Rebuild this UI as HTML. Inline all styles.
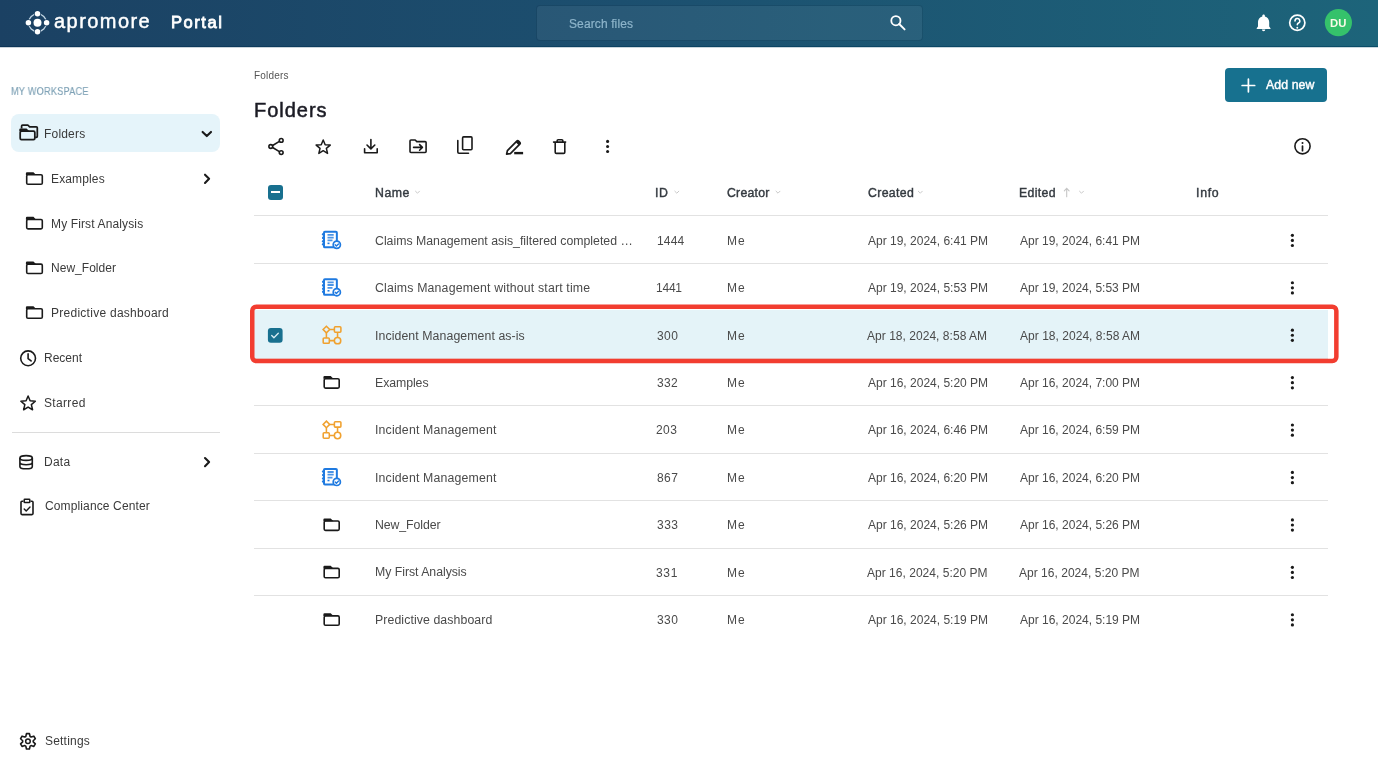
<!DOCTYPE html>
<html><head><meta charset="utf-8">
<style>
*{box-sizing:border-box;margin:0;padding:0}
html,body{width:1378px;height:783px;overflow:hidden;background:#fff;font-family:"Liberation Sans",sans-serif;color:#333}
#hdr{position:absolute;left:0;top:0;width:1378px;height:46px;background:linear-gradient(90deg,#1b4163 0%,#1c4f6f 45%,#1d647a 100%)}
#hdrl{position:absolute;left:0;top:46px;width:1378px;height:1px;background:linear-gradient(90deg,#0e3557 0%,#0c4262 45%,#0a4d68 100%)}
#hdrs{position:absolute;left:0;top:47px;width:1378px;height:1px;background:linear-gradient(90deg,#0e3557 0%,#0c4262 45%,#0a4d68 100%);opacity:0.22}
.t{position:absolute;white-space:nowrap;line-height:1;-webkit-font-smoothing:antialiased;will-change:transform}
svg{position:absolute;overflow:visible}
.box{position:absolute}
</style></head><body>
<div id="hdr"></div><div id="hdrl"></div><div id="hdrs"></div>
<svg style="left:0;top:0" width="240" height="47">
  <circle cx="37.5" cy="22.75" r="8.9" fill="none" stroke="#c4d7e5" stroke-width="1.3"/>
  <g fill="#1b4163"><circle cx="37.5" cy="13.75" r="3.4"/><circle cx="37.5" cy="31.75" r="3.4"/><circle cx="28.4" cy="22.75" r="3.4"/><circle cx="46.6" cy="22.75" r="3.4"/></g>
  <g fill="#fff"><circle cx="37.5" cy="22.75" r="4.0"/><circle cx="37.5" cy="13.75" r="2.75"/><circle cx="37.5" cy="31.75" r="2.75"/><circle cx="28.4" cy="22.75" r="2.75"/><circle cx="46.6" cy="22.75" r="2.75"/></g>
</svg>
<div class="t" style="left:54.22px;top:10.65px;font-size:20px;color:#fff;letter-spacing:1.446px;-webkit-text-stroke:0.45px #fff;">apromore</div>
<div class="t" style="left:170.76px;top:14.95px;font-size:16.6px;color:#fff;letter-spacing:1.509px;-webkit-text-stroke:0.8px #fff;">Portal</div>
<div class="box" style="left:537px;top:6px;width:385px;height:34px;border-radius:3px;background:rgba(255,255,255,0.058);box-shadow:0 0 0 1px rgba(0,20,40,0.10)"></div>
<div class="t" style="left:569.16px;top:17.69px;font-size:12px;color:#8db4ca;letter-spacing:0.115px;-webkit-text-stroke:0.2px #8db4ca;">Search files</div>
<svg style="left:0;top:0" width="1378" height="47">
  <circle cx="895.9" cy="20.7" r="4.6" fill="none" stroke="#fff" stroke-width="1.8"/>
  <line x1="899.2" y1="24" x2="904.6" y2="29.4" stroke="#fff" stroke-width="1.9" stroke-linecap="round"/>
  <path d="M1263.6 14.6c-0.8 0 -1.3 0.6 -1.3 1.3v0.5c-2.6 0.6 -4.3 2.9 -4.3 5.6v4.6l-1.3 1.6v0.9h13.8v-0.9l-1.3 -1.6v-4.6c0 -2.7 -1.7 -5 -4.3 -5.6v-0.5c0 -0.7 -0.5 -1.3 -1.3 -1.3z M1261.9 29.6a1.7 1.7 0 0 0 3.4 0z" fill="#fff"/>
  <circle cx="1297.3" cy="22.8" r="7.6" fill="none" stroke="#fff" stroke-width="1.7"/>
  <path d="M1295.0 20.9a2.4 2.4 0 1 1 3.5 2.15c-0.75 0.38 -1.2 0.9 -1.2 1.65v0.1" fill="none" stroke="#fff" stroke-width="1.55" stroke-linecap="round"/>
  <circle cx="1297.3" cy="27.7" r="0.95" fill="#fff"/>
  <circle cx="1338.4" cy="22.6" r="13.6" fill="#35c26b"/>
</svg>
<div class="t" style="left:1330.10px;top:17.87px;font-size:11.3px;color:#fbfbe8;font-weight:bold;">DU</div>
<div class="t" style="left:11.04px;top:86.02px;font-size:10.9px;color:#7fa2b6;letter-spacing:0.275px;-webkit-text-stroke:0.15px #7fa2b6;transform:scaleX(0.84);transform-origin:0 0;">MY WORKSPACE</div>
<div class="box" style="left:11.3px;top:114.2px;width:208.4px;height:37.6px;border-radius:8px;background:#e5f4fa"></div>
<div class="t" style="left:44.18px;top:127.79px;font-size:12px;color:#3a3a3a;letter-spacing:0.192px;">Folders</div>
<div class="t" style="left:51.26px;top:172.99px;font-size:12px;color:#3a3a3a;letter-spacing:0.138px;">Examples</div>
<div class="t" style="left:51.26px;top:217.66px;font-size:12px;color:#3a3a3a;letter-spacing:0.133px;">My First Analysis</div>
<div class="t" style="left:51.26px;top:262.33px;font-size:12px;color:#3a3a3a;letter-spacing:0.030px;">New_Folder</div>
<div class="t" style="left:51.26px;top:307.00px;font-size:12px;color:#3a3a3a;letter-spacing:0.265px;">Predictive dashboard</div>
<div class="t" style="left:44.18px;top:352.09px;font-size:12px;color:#3a3a3a;letter-spacing:0.002px;">Recent</div>
<div class="t" style="left:44.46px;top:396.79px;font-size:12px;color:#3a3a3a;letter-spacing:0.327px;">Starred</div>
<div class="box" style="left:11.5px;top:431.6px;width:208px;height:1px;background:#dcdcdc"></div>
<div class="t" style="left:44.18px;top:456.19px;font-size:12px;color:#3a3a3a;letter-spacing:0.250px;">Data</div>
<div class="t" style="left:44.82px;top:500.39px;font-size:12px;color:#3a3a3a;letter-spacing:0.129px;">Compliance Center</div>
<div class="t" style="left:44.50px;top:735.49px;font-size:12px;color:#3a3a3a;letter-spacing:0.201px;">Settings</div>
<svg style="left:0;top:0" width="240" height="783"><path d="M21.6 128.6V126q0 -1 1 -1H27.8l1.8 1.8H36.3q1 0 1 1V136.3q0 1 -1 1H35.2" fill="none" stroke="#1a1a1a" stroke-width="1.75" stroke-linejoin="round"/><rect x="20.18" y="131.18" width="14.65" height="8.45" rx="1.3" fill="none" stroke="#1a1a1a" stroke-width="1.75"/><path d="M19.30 132.05V129.60q0 -1.1 1.1 -1.1H26.52l2.85 2.85H19.30z" fill="#1a1a1a"/><path d="M202.6 131.9l4.2 4.2l4.2 -4.2" fill="none" stroke="#1a1a1a" stroke-width="2.1" stroke-linecap="round" stroke-linejoin="round"/><rect x="26.70" y="174.80" width="15.60" height="9.40" rx="1.3" fill="none" stroke="#1a1a1a" stroke-width="1.6"/><path d="M25.90 175.60V173.30q0 -1.1 1.1 -1.1H33.47l2.76 2.76H25.90z" fill="#1a1a1a"/><rect x="26.70" y="219.47" width="15.60" height="9.40" rx="1.3" fill="none" stroke="#1a1a1a" stroke-width="1.6"/><path d="M25.90 220.27V217.97q0 -1.1 1.1 -1.1H33.47l2.76 2.76H25.90z" fill="#1a1a1a"/><rect x="26.70" y="264.14" width="15.60" height="9.40" rx="1.3" fill="none" stroke="#1a1a1a" stroke-width="1.6"/><path d="M25.90 264.94V262.64q0 -1.1 1.1 -1.1H33.47l2.76 2.76H25.90z" fill="#1a1a1a"/><rect x="26.70" y="308.81" width="15.60" height="9.40" rx="1.3" fill="none" stroke="#1a1a1a" stroke-width="1.6"/><path d="M25.90 309.61V307.31q0 -1.1 1.1 -1.1H33.47l2.76 2.76H25.90z" fill="#1a1a1a"/><path d="M205.0 174.7l4.1 4.1l-4.1 4.1" fill="none" stroke="#1a1a1a" stroke-width="2.1" stroke-linecap="round" stroke-linejoin="round"/><circle cx="28.1" cy="358.3" r="7.4" fill="none" stroke="#1a1a1a" stroke-width="1.6"/><path d="M28.1 353.9v4.6l3 2.4" fill="none" stroke="#1a1a1a" stroke-width="1.6" stroke-linecap="round"/><polygon points="28.10,396.00 30.11,400.83 35.33,401.25 31.35,404.66 32.57,409.75 28.10,407.02 23.63,409.75 24.85,404.66 20.87,401.25 26.09,400.83" fill="none" stroke="#1a1a1a" stroke-width="1.5" stroke-linejoin="round"/><ellipse cx="26.1" cy="458" rx="6.2" ry="2.4" fill="none" stroke="#1a1a1a" stroke-width="1.6"/><path d="M19.9 458v8.4c0 1.4 2.8 2.4 6.2 2.4s6.2 -1 6.2 -2.4v-8.4 M19.9 462.3c0 1.4 2.8 2.4 6.2 2.4s6.2 -1 6.2 -2.4" fill="none" stroke="#1a1a1a" stroke-width="1.6"/><path d="M205.0 458.0l4.1 4.1l-4.1 4.1" fill="none" stroke="#1a1a1a" stroke-width="2.1" stroke-linecap="round" stroke-linejoin="round"/><path d="M23.4 501.2h-1.4q-1 0 -1 1v11.4q0 1 1 1h10q1 0 1 -1v-11.4q0 -1 -1 -1h-1.4" fill="none" stroke="#1a1a1a" stroke-width="1.6"/><rect x="24.2" y="499.3" width="5.6" height="3.2" rx="0.6" fill="none" stroke="#1a1a1a" stroke-width="1.5"/><path d="M24.2 509l2 2l3.8 -4" fill="none" stroke="#1a1a1a" stroke-width="1.4" stroke-linecap="round" stroke-linejoin="round"/><polygon points="25.79,736.46 26.46,733.64 29.44,733.64 30.11,736.46 31.07,737.01 33.84,736.18 35.33,738.76 33.22,740.75 33.22,741.85 35.33,743.84 33.84,746.42 31.07,745.59 30.11,746.14 29.44,748.96 26.46,748.96 25.79,746.14 24.83,745.59 22.06,746.42 20.57,743.84 22.68,741.85 22.68,740.75 20.57,738.76 22.06,736.18 24.83,737.01" fill="none" stroke="#1a1a1a" stroke-width="1.6" stroke-linejoin="round"/><circle cx="27.95" cy="741.3" r="2.3" fill="none" stroke="#1a1a1a" stroke-width="1.5"/></svg>
<div class="t" style="left:254.02px;top:71.42px;font-size:10px;color:#555;letter-spacing:0.180px;">Folders</div>
<div class="t" style="left:253.86px;top:99.65px;font-size:20px;color:#1b1b24;letter-spacing:0.972px;-webkit-text-stroke:0.5px #1b1b24;">Folders</div>
<div class="box" style="left:1224.9px;top:67.7px;width:102.6px;height:33.9px;border-radius:4px;background:#17718f"></div>
<div class="t" style="left:1265.84px;top:78.55px;font-size:12.3px;color:#fff;letter-spacing:0.085px;-webkit-text-stroke:0.4px #fff;">Add new</div>
<svg style="left:0;top:0" width="1378" height="783"><path d="M272.6 145.5L279.4 141.4 M272.6 147.5L279.4 151.6" fill="none" stroke="#1a1a1a" stroke-width="1.6" stroke-linecap="round" stroke-linejoin="round"/><circle cx="270.8" cy="146.5" r="1.9" fill="none" stroke="#1a1a1a" stroke-width="1.6" stroke-linecap="round" stroke-linejoin="round"/><circle cx="281.2" cy="140.4" r="1.9" fill="none" stroke="#1a1a1a" stroke-width="1.6" stroke-linecap="round" stroke-linejoin="round"/><circle cx="281.2" cy="152.6" r="1.9" fill="none" stroke="#1a1a1a" stroke-width="1.6" stroke-linecap="round" stroke-linejoin="round"/><polygon points="323.20,140.00 325.16,144.71 330.24,145.11 326.37,148.43 327.55,153.39 323.20,150.73 318.85,153.39 320.03,148.43 316.16,145.11 321.24,144.71" fill="none" stroke="#1a1a1a" stroke-width="1.5" stroke-linejoin="round"/><path d="M370.9 139.5v9.2 M367 145l3.9 3.9l3.9 -3.9 M364.6 148.8v3.9h12.6v-3.9" fill="none" stroke="#1a1a1a" stroke-width="1.6" stroke-linecap="round" stroke-linejoin="round"/><path d="M410 151.6v-10.6q0 -1 1 -1h4.2l1.6 1.6h8.3q1 0 1 1v8.9q0 1 -1 1h-14.1q-1 0 -1 -1z M413.6 147.4h8.6 M419.6 144.6l2.8 2.8l-2.8 2.8" fill="none" stroke="#1a1a1a" stroke-width="1.6" stroke-linecap="round" stroke-linejoin="round"/><rect x="462.6" y="136.9" width="9.4" height="12.9" rx="1" fill="none" stroke="#1a1a1a" stroke-width="1.6" stroke-linecap="round" stroke-linejoin="round"/><path d="M457.8 140.6v11.4q0 1.2 1.2 1.2h9.5" fill="none" stroke="#1a1a1a" stroke-width="1.6" stroke-linecap="round" stroke-linejoin="round"/><path d="M506.6 154.2l0.8 -3.6l9.4 -9.4q0.9 -0.9 1.8 0l1.2 1.2q0.9 0.9 0 1.8l-9.4 9.4z" fill="none" stroke="#1a1a1a" stroke-width="1.7" stroke-linejoin="round"/><path d="M516.6 141.4l3 3" stroke="#1a1a1a" stroke-width="2.4"/><rect x="514.2" y="151.9" width="8.9" height="2.4" fill="#1a1a1a"/><path d="M553.6 142.1h12 M555.2 142.6v9.6q0 1.2 1.2 1.2h7.2q1.2 0 1.2 -1.2v-9.6 M557.2 142v-1.4q0 -0.9 0.9 -0.9h3.8q0.9 0 0.9 0.9v1.4" fill="none" stroke="#1a1a1a" stroke-width="1.6" stroke-linecap="round" stroke-linejoin="round"/><circle cx="607.6" cy="141.4" r="1.55" fill="#1a1a1a"/><circle cx="607.6" cy="146.5" r="1.55" fill="#1a1a1a"/><circle cx="607.6" cy="151.5" r="1.55" fill="#1a1a1a"/><circle cx="1302.5" cy="146.3" r="7.6" fill="none" stroke="#1a1a1a" stroke-width="1.6"/><circle cx="1302.5" cy="143.1" r="1" fill="#1a1a1a"/><path d="M1302.5 146.1v4.6" stroke="#1a1a1a" stroke-width="1.7" stroke-linecap="round"/><path d="M1248.4 79.2v12.6 M1242.1 85.5h12.6" stroke="#fff" stroke-width="1.7" stroke-linecap="round"/></svg>
<div class="box" style="left:267.6px;top:184.8px;width:15.3px;height:15px;border-radius:3px;background:#18708f"></div>
<div class="box" style="left:270.6px;top:191px;width:9.4px;height:2.4px;background:#fff"></div>
<div class="t" style="left:375.03px;top:186.75px;font-size:12.3px;color:#343a40;letter-spacing:0.530px;-webkit-text-stroke:0.4px #343a40;">Name</div>
<div class="t" style="left:655.48px;top:186.75px;font-size:12.3px;color:#343a40;letter-spacing:0.561px;-webkit-text-stroke:0.4px #343a40;">ID</div>
<div class="t" style="left:727.22px;top:186.75px;font-size:12.3px;color:#343a40;letter-spacing:0.228px;-webkit-text-stroke:0.4px #343a40;">Creator</div>
<div class="t" style="left:867.70px;top:186.75px;font-size:12.3px;color:#343a40;letter-spacing:0.333px;-webkit-text-stroke:0.4px #343a40;">Created</div>
<div class="t" style="left:1019.41px;top:186.75px;font-size:12.3px;color:#343a40;letter-spacing:0.348px;-webkit-text-stroke:0.4px #343a40;">Edited</div>
<div class="t" style="left:1195.56px;top:186.75px;font-size:12.3px;color:#343a40;letter-spacing:0.723px;-webkit-text-stroke:0.4px #343a40;">Info</div>
<svg style="left:0;top:0" width="1378" height="783"><path d="M415.5 191.2l2 2l2 -2" fill="none" stroke="#c8c8c8" stroke-width="1" stroke-linecap="round"/><path d="M674.8 191.2l2 2l2 -2" fill="none" stroke="#c8c8c8" stroke-width="1" stroke-linecap="round"/><path d="M776 191.2l2 2l2 -2" fill="none" stroke="#c8c8c8" stroke-width="1" stroke-linecap="round"/><path d="M918.3 191.2l2 2l2 -2" fill="none" stroke="#c8c8c8" stroke-width="1" stroke-linecap="round"/><path d="M1079.5 191.2l2 2l2 -2" fill="none" stroke="#c8c8c8" stroke-width="1" stroke-linecap="round"/><path d="M1066.7 188.4v8.4 M1064.3 190.8l2.4 -2.4l2.4 2.4" fill="none" stroke="#c6c6c6" stroke-width="1.1" stroke-linecap="round"/></svg>
<div class="box" style="left:254px;top:215px;width:1074px;height:1px;background:#e2e2e2"></div>
<div class="box" style="left:254px;top:263px;width:1074px;height:1px;background:#e2e2e2"></div>
<div class="t" style="left:374.59px;top:234.85px;font-size:12.3px;color:#4a4a4a;letter-spacing:0.001px;">Claims Management asis_filtered completed …</div>
<div class="t" style="left:656.50px;top:234.89px;font-size:12px;color:#4a4a4a;letter-spacing:0.196px;">1444</div>
<div class="t" style="left:726.80px;top:234.89px;font-size:12px;color:#4a4a4a;letter-spacing:0.896px;">Me</div>
<div class="t" style="left:867.54px;top:234.89px;font-size:12px;color:#4a4a4a;letter-spacing:0.002px;">Apr 19, 2024, 6:41 PM</div>
<div class="t" style="left:1020.10px;top:234.89px;font-size:12px;color:#4a4a4a;letter-spacing:0.002px;">Apr 19, 2024, 6:41 PM</div>
<div class="box" style="left:254px;top:310px;width:1074px;height:1px;background:#e2e2e2"></div>
<div class="t" style="left:374.66px;top:282.23px;font-size:12.3px;color:#4a4a4a;letter-spacing:0.171px;">Claims Management without start time</div>
<div class="t" style="left:655.94px;top:282.26px;font-size:12px;color:#4a4a4a;letter-spacing:-0.217px;">1441</div>
<div class="t" style="left:726.80px;top:282.26px;font-size:12px;color:#4a4a4a;letter-spacing:0.896px;">Me</div>
<div class="t" style="left:867.54px;top:282.26px;font-size:12px;color:#4a4a4a;letter-spacing:0.002px;">Apr 19, 2024, 5:53 PM</div>
<div class="t" style="left:1020.10px;top:282.26px;font-size:12px;color:#4a4a4a;letter-spacing:0.002px;">Apr 19, 2024, 5:53 PM</div>
<div class="box" style="left:254px;top:310.16px;width:1074px;height:47.43px;background:#e4f3f8"></div>
<div class="box" style="left:254px;top:358px;width:1074px;height:1px;background:#e2e2e2"></div>
<div class="t" style="left:374.74px;top:329.60px;font-size:12.3px;color:#4a4a4a;letter-spacing:0.087px;">Incident Management as-is</div>
<div class="t" style="left:656.70px;top:329.64px;font-size:12px;color:#4a4a4a;letter-spacing:0.416px;">300</div>
<div class="t" style="left:726.80px;top:329.64px;font-size:12px;color:#4a4a4a;letter-spacing:0.888px;">Me</div>
<div class="t" style="left:867.46px;top:329.64px;font-size:12px;color:#4a4a4a;letter-spacing:0.033px;">Apr 18, 2024, 8:58 AM</div>
<div class="t" style="left:1020.02px;top:329.64px;font-size:12px;color:#4a4a4a;letter-spacing:0.033px;">Apr 18, 2024, 8:58 AM</div>
<div class="box" style="left:254px;top:405px;width:1074px;height:1px;background:#e2e2e2"></div>
<div class="t" style="left:374.68px;top:376.98px;font-size:12.3px;color:#4a4a4a;letter-spacing:-0.064px;">Examples</div>
<div class="t" style="left:656.70px;top:377.01px;font-size:12px;color:#4a4a4a;letter-spacing:0.369px;">332</div>
<div class="t" style="left:726.80px;top:377.01px;font-size:12px;color:#4a4a4a;letter-spacing:0.896px;">Me</div>
<div class="t" style="left:867.54px;top:377.01px;font-size:12px;color:#4a4a4a;letter-spacing:0.002px;">Apr 16, 2024, 5:20 PM</div>
<div class="t" style="left:1020.10px;top:377.01px;font-size:12px;color:#4a4a4a;letter-spacing:0.002px;">Apr 16, 2024, 7:00 PM</div>
<div class="box" style="left:254px;top:453px;width:1074px;height:1px;background:#e2e2e2"></div>
<div class="t" style="left:374.74px;top:424.35px;font-size:12.3px;color:#4a4a4a;letter-spacing:0.178px;">Incident Management</div>
<div class="t" style="left:656.32px;top:424.39px;font-size:12px;color:#4a4a4a;letter-spacing:0.413px;">203</div>
<div class="t" style="left:726.80px;top:424.39px;font-size:12px;color:#4a4a4a;letter-spacing:0.896px;">Me</div>
<div class="t" style="left:867.54px;top:424.39px;font-size:12px;color:#4a4a4a;letter-spacing:0.002px;">Apr 16, 2024, 6:46 PM</div>
<div class="t" style="left:1020.10px;top:424.39px;font-size:12px;color:#4a4a4a;letter-spacing:0.002px;">Apr 16, 2024, 6:59 PM</div>
<div class="box" style="left:254px;top:500px;width:1074px;height:1px;background:#e2e2e2"></div>
<div class="t" style="left:374.74px;top:471.73px;font-size:12.3px;color:#4a4a4a;letter-spacing:0.178px;">Incident Management</div>
<div class="t" style="left:656.64px;top:471.76px;font-size:12px;color:#4a4a4a;letter-spacing:0.441px;">867</div>
<div class="t" style="left:726.80px;top:471.76px;font-size:12px;color:#4a4a4a;letter-spacing:0.896px;">Me</div>
<div class="t" style="left:867.54px;top:471.76px;font-size:12px;color:#4a4a4a;letter-spacing:0.002px;">Apr 16, 2024, 6:20 PM</div>
<div class="t" style="left:1020.10px;top:471.76px;font-size:12px;color:#4a4a4a;letter-spacing:0.002px;">Apr 16, 2024, 6:20 PM</div>
<div class="box" style="left:254px;top:548px;width:1074px;height:1px;background:#e2e2e2"></div>
<div class="t" style="left:374.68px;top:519.10px;font-size:12.3px;color:#4a4a4a;letter-spacing:-0.085px;">New_Folder</div>
<div class="t" style="left:656.70px;top:519.14px;font-size:12px;color:#4a4a4a;letter-spacing:0.475px;">333</div>
<div class="t" style="left:726.80px;top:519.14px;font-size:12px;color:#4a4a4a;letter-spacing:0.896px;">Me</div>
<div class="t" style="left:867.54px;top:519.14px;font-size:12px;color:#4a4a4a;letter-spacing:0.002px;">Apr 16, 2024, 5:26 PM</div>
<div class="t" style="left:1020.10px;top:519.14px;font-size:12px;color:#4a4a4a;letter-spacing:0.002px;">Apr 16, 2024, 5:26 PM</div>
<div class="box" style="left:254px;top:595px;width:1074px;height:1px;background:#e2e2e2"></div>
<div class="t" style="left:374.68px;top:566.48px;font-size:12.3px;color:#4a4a4a;letter-spacing:-0.033px;">My First Analysis</div>
<div class="t" style="left:656.14px;top:566.51px;font-size:12px;color:#4a4a4a;letter-spacing:0.659px;">331</div>
<div class="t" style="left:726.80px;top:566.51px;font-size:12px;color:#4a4a4a;letter-spacing:0.896px;">Me</div>
<div class="t" style="left:866.78px;top:566.51px;font-size:12px;color:#4a4a4a;letter-spacing:0.021px;">Apr 16, 2024, 5:20 PM</div>
<div class="t" style="left:1019.34px;top:566.51px;font-size:12px;color:#4a4a4a;letter-spacing:0.021px;">Apr 16, 2024, 5:20 PM</div>
<div class="t" style="left:374.68px;top:613.85px;font-size:12.3px;color:#4a4a4a;letter-spacing:0.094px;">Predictive dashboard</div>
<div class="t" style="left:656.70px;top:613.89px;font-size:12px;color:#4a4a4a;letter-spacing:0.414px;">330</div>
<div class="t" style="left:726.80px;top:613.89px;font-size:12px;color:#4a4a4a;letter-spacing:0.896px;">Me</div>
<div class="t" style="left:867.54px;top:613.89px;font-size:12px;color:#4a4a4a;letter-spacing:0.002px;">Apr 16, 2024, 5:19 PM</div>
<div class="t" style="left:1020.10px;top:613.89px;font-size:12px;color:#4a4a4a;letter-spacing:0.002px;">Apr 16, 2024, 5:19 PM</div>
<svg style="left:0;top:0" width="1378" height="783"><circle cx="1292.4" cy="235.30" r="1.6" fill="#1a1a1a"/><circle cx="1292.4" cy="240.40" r="1.6" fill="#1a1a1a"/><circle cx="1292.4" cy="245.50" r="1.6" fill="#1a1a1a"/><g transform="translate(322.2,230.9)"><rect x="1.8" y="0.85" width="12.85" height="15.6" rx="0.9" fill="none" stroke="#1f7ae0" stroke-width="2"/><circle cx="1.1" cy="3.45" r="1.35" fill="#1f7ae0"/><circle cx="1.1" cy="7.05" r="1.35" fill="#1f7ae0"/><circle cx="1.1" cy="10.45" r="1.35" fill="#1f7ae0"/><circle cx="1.1" cy="13.45" r="1.35" fill="#1f7ae0"/><path d="M5.3 3.95h6.2 M5.3 6.65h6.2 M5.3 9.55h5" stroke="#1f7ae0" stroke-width="1.8" opacity="0.8"/><path d="M5.3 12.45h2" stroke="#1f7ae0" stroke-width="1.6"/><circle cx="14.6" cy="13.85" r="3.6" fill="#fff" stroke="#1f7ae0" stroke-width="1.7"/><path d="M13.0 13.9l1.2 1.2l2.1 -2.1" fill="none" stroke="#1f7ae0" stroke-width="1.4" stroke-linecap="round" stroke-linejoin="round"/></g><circle cx="1292.4" cy="282.73" r="1.6" fill="#1a1a1a"/><circle cx="1292.4" cy="287.83" r="1.6" fill="#1a1a1a"/><circle cx="1292.4" cy="292.93" r="1.6" fill="#1a1a1a"/><g transform="translate(322.2,278.33000000000004)"><rect x="1.8" y="0.85" width="12.85" height="15.6" rx="0.9" fill="none" stroke="#1f7ae0" stroke-width="2"/><circle cx="1.1" cy="3.45" r="1.35" fill="#1f7ae0"/><circle cx="1.1" cy="7.05" r="1.35" fill="#1f7ae0"/><circle cx="1.1" cy="10.45" r="1.35" fill="#1f7ae0"/><circle cx="1.1" cy="13.45" r="1.35" fill="#1f7ae0"/><path d="M5.3 3.95h6.2 M5.3 6.65h6.2 M5.3 9.55h5" stroke="#1f7ae0" stroke-width="1.8" opacity="0.8"/><path d="M5.3 12.45h2" stroke="#1f7ae0" stroke-width="1.6"/><circle cx="14.6" cy="13.85" r="3.6" fill="#fff" stroke="#1f7ae0" stroke-width="1.7"/><path d="M13.0 13.9l1.2 1.2l2.1 -2.1" fill="none" stroke="#1f7ae0" stroke-width="1.4" stroke-linecap="round" stroke-linejoin="round"/></g><circle cx="1292.4" cy="330.16" r="1.6" fill="#1a1a1a"/><circle cx="1292.4" cy="335.26" r="1.6" fill="#1a1a1a"/><circle cx="1292.4" cy="340.36" r="1.6" fill="#1a1a1a"/><g transform="translate(321.8,325.36)" fill="none" stroke="#f0a12f" stroke-width="1.55"><path d="M4.6 0.88L7.9 4.18L4.6 7.48L1.3 4.18z"/><rect x="12.6" y="1.48" width="6.5" height="5.4" rx="0.9"/><rect x="1.4" y="12.58" width="6.1" height="5.4" rx="0.9"/><circle cx="15.75" cy="15.28" r="3.2"/><path d="M7.9 4.18H12.6 M4.6 7.48V12.58 M15.75 6.88V12.08 M7.5 15.28H12.55"/></g><circle cx="1292.4" cy="377.59" r="1.6" fill="#1a1a1a"/><circle cx="1292.4" cy="382.69" r="1.6" fill="#1a1a1a"/><circle cx="1292.4" cy="387.79" r="1.6" fill="#1a1a1a"/><rect x="324.20" y="378.69" width="15.00" height="9.40" rx="1.3" fill="none" stroke="#1a1a1a" stroke-width="1.6"/><path d="M323.40 379.49V377.19q0 -1.1 1.1 -1.1H330.70l2.76 2.76H323.40z" fill="#1a1a1a"/><circle cx="1292.4" cy="425.02" r="1.6" fill="#1a1a1a"/><circle cx="1292.4" cy="430.12" r="1.6" fill="#1a1a1a"/><circle cx="1292.4" cy="435.22" r="1.6" fill="#1a1a1a"/><g transform="translate(321.8,420.21999999999997)" fill="none" stroke="#f0a12f" stroke-width="1.55"><path d="M4.6 0.88L7.9 4.18L4.6 7.48L1.3 4.18z"/><rect x="12.6" y="1.48" width="6.5" height="5.4" rx="0.9"/><rect x="1.4" y="12.58" width="6.1" height="5.4" rx="0.9"/><circle cx="15.75" cy="15.28" r="3.2"/><path d="M7.9 4.18H12.6 M4.6 7.48V12.58 M15.75 6.88V12.08 M7.5 15.28H12.55"/></g><circle cx="1292.4" cy="472.45" r="1.6" fill="#1a1a1a"/><circle cx="1292.4" cy="477.55" r="1.6" fill="#1a1a1a"/><circle cx="1292.4" cy="482.65" r="1.6" fill="#1a1a1a"/><g transform="translate(322.2,468.05000000000007)"><rect x="1.8" y="0.85" width="12.85" height="15.6" rx="0.9" fill="none" stroke="#1f7ae0" stroke-width="2"/><circle cx="1.1" cy="3.45" r="1.35" fill="#1f7ae0"/><circle cx="1.1" cy="7.05" r="1.35" fill="#1f7ae0"/><circle cx="1.1" cy="10.45" r="1.35" fill="#1f7ae0"/><circle cx="1.1" cy="13.45" r="1.35" fill="#1f7ae0"/><path d="M5.3 3.95h6.2 M5.3 6.65h6.2 M5.3 9.55h5" stroke="#1f7ae0" stroke-width="1.8" opacity="0.8"/><path d="M5.3 12.45h2" stroke="#1f7ae0" stroke-width="1.6"/><circle cx="14.6" cy="13.85" r="3.6" fill="#fff" stroke="#1f7ae0" stroke-width="1.7"/><path d="M13.0 13.9l1.2 1.2l2.1 -2.1" fill="none" stroke="#1f7ae0" stroke-width="1.4" stroke-linecap="round" stroke-linejoin="round"/></g><circle cx="1292.4" cy="519.88" r="1.6" fill="#1a1a1a"/><circle cx="1292.4" cy="524.98" r="1.6" fill="#1a1a1a"/><circle cx="1292.4" cy="530.08" r="1.6" fill="#1a1a1a"/><rect x="324.20" y="520.98" width="15.00" height="9.40" rx="1.3" fill="none" stroke="#1a1a1a" stroke-width="1.6"/><path d="M323.40 521.78V519.48q0 -1.1 1.1 -1.1H330.70l2.76 2.76H323.40z" fill="#1a1a1a"/><circle cx="1292.4" cy="567.31" r="1.6" fill="#1a1a1a"/><circle cx="1292.4" cy="572.41" r="1.6" fill="#1a1a1a"/><circle cx="1292.4" cy="577.51" r="1.6" fill="#1a1a1a"/><rect x="324.20" y="568.41" width="15.00" height="9.40" rx="1.3" fill="none" stroke="#1a1a1a" stroke-width="1.6"/><path d="M323.40 569.21V566.91q0 -1.1 1.1 -1.1H330.70l2.76 2.76H323.40z" fill="#1a1a1a"/><circle cx="1292.4" cy="614.74" r="1.6" fill="#1a1a1a"/><circle cx="1292.4" cy="619.84" r="1.6" fill="#1a1a1a"/><circle cx="1292.4" cy="624.94" r="1.6" fill="#1a1a1a"/><rect x="324.20" y="615.84" width="15.00" height="9.40" rx="1.3" fill="none" stroke="#1a1a1a" stroke-width="1.6"/><path d="M323.40 616.64V614.34q0 -1.1 1.1 -1.1H330.70l2.76 2.76H323.40z" fill="#1a1a1a"/><rect x="267.9" y="327.9" width="14.7" height="14.8" rx="3" fill="#18708f"/><path d="M271.7 335.5l2.2 2.2l4.4 -4.4" fill="none" stroke="#d9eef5" stroke-width="1.3" stroke-linecap="round" stroke-linejoin="round"/><rect x="252.25" y="306.75" width="1084.1" height="54.3" rx="4" fill="none" stroke="#f23d30" stroke-width="4.5"/></svg>
</body></html>
